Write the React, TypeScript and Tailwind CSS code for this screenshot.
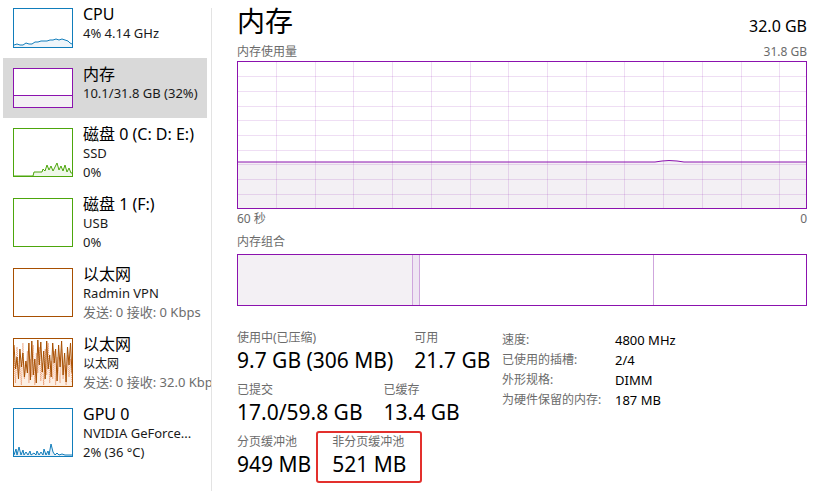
import React from "react";

const font = "font-['Noto_Sans','Noto_Sans_CJK_SC',sans-serif]";

type Line = { text: string; muted?: boolean; latin?: boolean };

type Item = {
  name: string;
  lines: Line[];
  color: string;
  tall: boolean;
  kind: string;
  selected?: boolean;
};

const items: Item[] = [
  { name: "CPU", lines: [{ text: "4% 4.14 GHz", latin: true }], color: "#117dbb", tall: false, kind: "cpu" },
  { name: "内存", lines: [{ text: "10.1/31.8 GB (32%)", latin: true }], color: "#8b12ae", tall: false, kind: "mem", selected: true },
  { name: "磁盘 0 (C: D: E:)", lines: [{ text: "SSD", latin: true }, { text: "0%", latin: true }], color: "#4da60c", tall: true, kind: "disk0" },
  { name: "磁盘 1 (F:)", lines: [{ text: "USB", latin: true }, { text: "0%", latin: true }], color: "#4da60c", tall: true, kind: "none" },
  { name: "以太网", lines: [{ text: "Radmin VPN", latin: true }, { text: "发送: 0 接收: 0 Kbps", muted: true, latin: true }], color: "#a74f01", tall: true, kind: "none" },
  { name: "以太网", lines: [{ text: "以太网" }, { text: "发送: 0 接收: 32.0 Kbps", muted: true, latin: true }], color: "#a74f01", tall: true, kind: "eth" },
  { name: "GPU 0", lines: [{ text: "NVIDIA GeForce...", latin: true }, { text: "2% (36 °C)", latin: true }], color: "#117dbb", tall: true, kind: "gpu" },
];

const ethA = [6, 30, 18, 40, 10, 28, 14, 38, 22, 34, 4, 41, 2, 36, 20, 44, 1, 26, 3, 33, 12, 40, 2, 30, 16, 38, 4, 24, 10, 42, 6, 28, 2, 36, 14, 43, 8, 26, 4, 34];
const ethB = [20, 44, 8, 36, 26, 46, 4, 40, 30, 12, 44, 20, 38, 6, 46, 14, 34, 8, 42, 24, 46, 10, 36, 4, 44, 22, 40, 12, 46, 18, 32, 44, 10, 40, 26, 46, 16, 38, 20, 44];

function pts(vals: number[], w: number) {
  return vals.map((v, i) => `${((i * w) / (vals.length - 1)).toFixed(1)},${v}`).join(" ");
}

function Graph({ kind, h }: { kind: string; h: number }) {
  if (kind === "cpu") {
    const line = "0,36 3,35 6,36 9,36 12,34 15,35 18,35 21,33 24,33 27,32 30,32 33,32 36,31 39,31 42,30 45,31 48,30 51,31 54,32 56,34 58,35";
    return (
      <svg width="58" height={h} className="block">
        <polygon points={`${line} 58,${h} 0,${h}`} fill="#eef5fa" />
        <polyline points={line} fill="none" stroke="#117dbb" strokeWidth="1" />
      </svg>
    );
  }
  if (kind === "mem") {
    return (
      <svg width="58" height={h} className="block">
        <rect x="0" y="26" width="58" height={h - 26} fill="#f3f0f4" />
        <line x1="0" y1="26.5" x2="58" y2="26.5" stroke="#8b12ae" strokeWidth="1" />
      </svg>
    );
  }
  if (kind === "disk0") {
    const line = "0,47 19,47 20,43 28,43 29,40 31,42 33,36 35,41 37,37 39,42 41,38 43,34 45,41 47,37 49,42 51,36 53,43 55,39 57,44 58,44";
    return (
      <svg width="58" height={h} className="block">
        <polygon points={`${line} 58,${h} 0,${h}`} fill="#eef7e8" />
        <polyline points={line} fill="none" stroke="#4da60c" strokeWidth="1" />
      </svg>
    );
  }
  if (kind === "eth") {
    const a = pts(ethA, 58);
    const b = pts(ethB, 58);
    return (
      <svg width="58" height={h} className="block">
        <polygon points={`${a} 58,${h} 0,${h}`} fill="#fcefe4" />
        <polyline points={b} fill="none" stroke="#ec9b72" strokeWidth="1" strokeDasharray="1 1" />
        <polyline points={a} fill="none" stroke="#a74f01" strokeWidth="1" />
      </svg>
    );
  }
  if (kind === "gpu") {
    const line = "0,46 2,40 3,46 5,38 7,46 9,41 10,46 12,43 14,46 16,42 17,46 20,44 22,46 23,42 25,46 27,43 29,46 30,40 32,46 34,42 35,46 37,35 39,43 41,46 43,44 45,46 48,45 51,46 58,46";
    return (
      <svg width="58" height={h} className="block">
        <polygon points={`${line} 58,${h} 0,${h}`} fill="#e6f0f8" />
        <polyline points={line} fill="none" stroke="#117dbb" strokeWidth="1" />
      </svg>
    );
  }
  return null;
}

function SideItem({ item }: { item: Item }) {
  const boxH = item.tall ? 47 : 38;
  return (
    <div
      className={`flex items-start pl-[10px] pt-[6px] ${item.tall ? "h-[70px]" : "h-[60px]"} ${
        item.selected ? "bg-[#d9d9d9]" : ""
      }`}
    >
      <div
        className={`mt-[4px] w-[60px] shrink-0 border bg-white ${item.tall ? "h-[49px]" : "h-[40px]"}`}
        style={{ borderColor: item.color }}
      >
        <Graph kind={item.kind} h={boxH} />
      </div>
      <div className="ml-[10px] whitespace-nowrap">
        <div className="text-[16px] leading-[20px] text-black">{item.name}</div>
        {item.lines.map((l, i) => (
          <div
            key={i}
            className={`leading-[19px] ${l.latin ? "text-[13px]" : "text-[12px]"} ${
              l.muted ? "text-[#6d6d6d]" : "text-[#1a1a1a]"
            }`}
          >
            {l.text}
          </div>
        ))}
      </div>
    </div>
  );
}

function UsageChart() {
  const w = 570;
  const h = 148;
  const vx = Array.from({ length: 14 }, (_, i) => 39 + i * 38.72);
  const hy = Array.from({ length: 9 }, (_, i) => 0.5 + (i + 1) * 14.7);
  const usage = `1,101 418,101 425,100 432,99.5 440,100 447,101 569,101`;
  return (
    <svg width={w} height={h} className="block">
      <polygon points={`${usage} 569,147 1,147`} fill="#f3f0f4" />
      {vx.map((x) => (
        <line key={x} x1={Math.round(x) + 0.5} y1="1" x2={Math.round(x) + 0.5} y2={h - 1} stroke="#8b12ae" strokeOpacity="0.14" />
      ))}
      {hy.map((y) => (
        <line key={y} x1="1" y1={Math.round(y) + 0.5} x2={w - 1} y2={Math.round(y) + 0.5} stroke="#8b12ae" strokeOpacity="0.14" />
      ))}
      <polyline points={usage} fill="none" stroke="#8b12ae" strokeWidth="1" />
      <rect x="0.5" y="0.5" width={w - 1} height={h - 1} fill="none" stroke="#8b12ae" strokeWidth="1" />
    </svg>
  );
}

function Stat({ label, value }: { label: string; value: string }) {
  return (
    <div className="whitespace-nowrap">
      <div className="text-[12px] leading-[16px] text-[#6b6b6b]">{label}</div>
      <div className="text-[21px] leading-[28px] text-black">{value}</div>
    </div>
  );
}

export default function App() {
  return (
    <div className={`w-[827px] h-[491px] bg-white flex overflow-hidden ${font}`}>
      {/* Sidebar */}
      <div className="w-[211px] shrink-0 overflow-hidden pl-[3px] pr-[4px] -mt-[2px]">
        {items.map((it, i) => (
          <SideItem key={i} item={it} />
        ))}
      </div>
      <div className="w-px shrink-0 mt-[8px] bg-[#e3e3e3]" />

      {/* Main */}
      <div className="flex-1 pl-[25px] pr-[20px]">
        <div className="h-[44px] pt-[3px] flex items-baseline justify-between">
          <span className="text-[28px] leading-[36px] text-black">内存</span>
          <span className="text-[16px] leading-[24px] text-black">32.0 GB</span>
        </div>
        <div className="h-[17px] flex justify-between text-[12px] leading-[16px] text-[#6b6b6b]">
          <span>内存使用量</span>
          <span>31.8 GB</span>
        </div>
        <UsageChart />
        <div className="mt-[2px] flex justify-between text-[12px] leading-[16px] text-[#6b6b6b]">
          <span>60 秒</span>
          <span>0</span>
        </div>
        <div className="mt-[7px] text-[12px] leading-[16px] text-[#6b6b6b]">内存组合</div>
        <div className="mt-[4px] h-[52px] border border-[#8b12ae] flex">
          <div className="w-[175px] bg-[#f3f0f4] border-r border-[#cfa6dd]" />
          <div className="w-[7px] bg-[#efe6f3] border-r border-[#cfa6dd]" />
          <div className="w-[234px] border-r border-[#cfa6dd]" />
          <div className="flex-1" />
        </div>

        {/* Stats */}
        <div className="mt-[24px] flex items-start">
          <div className="w-[265px] shrink-0 flex flex-col gap-[8px]">
            <div className="flex gap-[21px]">
              <Stat label="使用中(已压缩)" value="9.7 GB (306 MB)" />
              <Stat label="可用" value="21.7 GB" />
            </div>
            <div className="flex gap-[21px]">
              <Stat label="已提交" value="17.0/59.8 GB" />
              <Stat label="已缓存" value="13.4 GB" />
            </div>
            <div className="flex gap-[21px]">
              <Stat label="分页缓冲池" value="949 MB" />
              <div className="relative">
                <Stat label="非分页缓冲池" value="521 MB" />
                <div className="absolute -left-[16px] -top-[3px] w-[106px] h-[52px] border-2 border-[#e3302d] rounded-[3px]" />
              </div>
            </div>
          </div>
          <div className="grid grid-cols-[113px_auto] leading-[20px] whitespace-nowrap">
            <span className="text-[12px] text-[#6b6b6b]">速度:</span>
            <span className="text-[13px] text-black">4800 MHz</span>
            <span className="text-[12px] text-[#6b6b6b]">已使用的插槽:</span>
            <span className="text-[13px] text-black">2/4</span>
            <span className="text-[12px] text-[#6b6b6b]">外形规格:</span>
            <span className="text-[13px] text-black">DIMM</span>
            <span className="text-[12px] text-[#6b6b6b]">为硬件保留的内存:</span>
            <span className="text-[13px] text-black">187 MB</span>
          </div>
        </div>
      </div>
    </div>
  );
}
